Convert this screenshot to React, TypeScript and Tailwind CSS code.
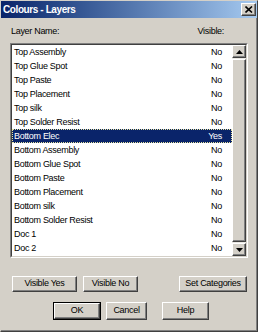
import React from "react";

const rows: [string, string][] = [
  ["Top Assembly", "No"],
  ["Top Glue Spot", "No"],
  ["Top Paste", "No"],
  ["Top Placement", "No"],
  ["Top silk", "No"],
  ["Top Solder Resist", "No"],
  ["Bottom Elec", "Yes"],
  ["Bottom Assembly", "No"],
  ["Bottom Glue Spot", "No"],
  ["Bottom Paste", "No"],
  ["Bottom Placement", "No"],
  ["Bottom silk", "No"],
  ["Bottom Solder Resist", "No"],
  ["Doc 1", "No"],
  ["Doc 2", "No"],
];

const raised =
  "bg-[#d4d0c8] border border-t-white border-l-white border-r-[#404040] border-b-[#404040] shadow-[inset_-1px_-1px_0_#808080]";

function Btn({ label, className, def }: { label: string; className: string; def?: boolean }) {
  if (def) {
    return (
      <div className={`${className} border border-black`}>
        <div className={`${raised} h-full flex items-center justify-center whitespace-nowrap`}>{label}</div>
      </div>
    );
  }
  return (
    <div className={`${className} ${raised} flex items-center justify-center whitespace-nowrap`}>{label}</div>
  );
}

function Arrow({ up }: { up?: boolean }) {
  return (
    <div className={`${raised} h-[13px] flex items-center justify-center shrink-0`}>
      <svg width="7" height="4" viewBox="0 0 7 4">
        {up ? <polygon points="3.5,0 7,4 0,4" fill="#000" /> : <polygon points="0,0 7,0 3.5,4" fill="#000" />}
      </svg>
    </div>
  );
}

export default function App() {
  return (
    <div className="w-[258px] h-[332px] bg-[#d4d0c8] border border-t-[#d4d0c8] border-l-[#d4d0c8] border-r-[#404040] border-b-[#404040] shadow-[inset_-1px_-1px_0_#808080] flex flex-col text-black font-['Liberation_Sans',Arial,sans-serif] text-[9px] tracking-[-0.3px]">
      {/* title bar */}
      <div className="h-[17px] shrink-0 flex items-center justify-between bg-gradient-to-r from-[#0a246a] to-[#a6caf0] pl-[2px] pr-[1px]">
        <span className="text-white font-bold text-[10px] tracking-[-0.4px] leading-none">Colours - Layers</span>
        <div className={`${raised} w-[15px] h-[13px] flex items-center justify-center`}>
          <svg width="8" height="7" viewBox="0 0 8 7">
            <path d="M0.5 0.5 L7 6.5 M7 0.5 L0.5 6.5" stroke="#000" strokeWidth="1.6" />
          </svg>
        </div>
      </div>

      {/* header */}
      <div className="mt-[7px] ml-[10px] w-[213px] flex justify-between leading-[12px]">
        <span>Layer Name:</span>
        <span>Visible:</span>
      </div>

      {/* list box */}
      <div className="mt-[6px] ml-[9px] w-[238px] h-[215px] border border-t-[#808080] border-l-[#808080] border-r-white border-b-white">
        <div className="h-full border border-t-[#404040] border-l-[#404040] border-r-[#d4d0c8] border-b-[#d4d0c8] bg-white flex">
          <div className="flex-1 flex flex-col">
            {rows.map(([name, vis]) => {
              const sel = vis === "Yes";
              return (
                <div
                  key={name}
                  className={`h-[14px] shrink-0 flex justify-between items-center pl-[2px] pr-[10px] leading-[14px] ${
                    sel ? "bg-[#0a246a] text-white outline outline-1 outline-dotted outline-[#e8e4a0] -outline-offset-1" : ""
                  }`}
                >
                  <span>{name}</span>
                  <span>{vis}</span>
                </div>
              );
            })}
          </div>
          <div className="w-[14px] flex flex-col bg-[#ebe9e4]">
            <Arrow up />
            <div className={`${raised} flex-1 mt-px mb-px`} />
            <Arrow />
          </div>
        </div>
      </div>

      {/* button row 1 */}
      <div className="mt-[18px] ml-[11px] flex h-[16px]">
        <Btn label="Visible Yes" className="w-[65px]" />
        <Btn label="Visible No" className="w-[55px] ml-[6px]" />
        <Btn label="Set Categories" className="w-[68px] ml-[41px]" />
      </div>

      {/* button row 2 */}
      <div className="mt-[10px] ml-[52px] flex h-[18px]">
        <Btn label="OK" className="w-[48px]" def />
        <Btn label="Cancel" className="w-[41px] ml-[5px]" />
        <Btn label="Help" className="w-[47px] ml-[15px]" />
      </div>
    </div>
  );
}
